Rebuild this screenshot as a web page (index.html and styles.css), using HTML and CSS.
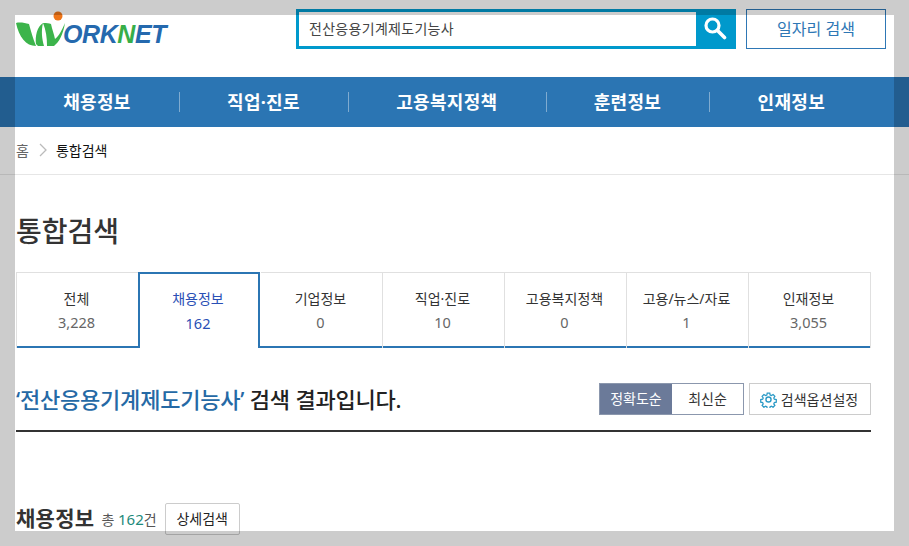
FILE: index.html
```html
<!DOCTYPE html>
<html lang="ko">
<head>
    <meta charset="UTF-8">
    <meta name="viewport" content="width=device-width, initial-scale=1.0">
    <title>WORKNET - 통합검색</title>
    <link rel="stylesheet" href="styles.css">
</head>
<body>
    <header class="top">
        <a class="logo" href="#">
            <svg class="logo-mark" width="50" height="36" viewBox="0 0 50 36">
                <circle cx="42" cy="5" r="4.5" fill="#ee7518"/>
                <path d="M0 12 C4 11 9 12 13 13 C15 20 17 28 20 35 C10 35 3 26 0 12Z" fill="#3cb44b"/>
                <path d="M20 33 C19 25 21 16 27 12 C25 20 26 28 28 35 L22 35Z" fill="#3cb44b"/>
                <path d="M27 12 C31 12 33 12 35 13 C36 18 38 23 39 28 C43 25 46 19 49 12 C47 24 43 31 38 35 L31 35 C31 27 30 19 27 12Z" fill="#3cb44b"/>
            </svg>
            <span class="logo-text">ORK<b>N</b>ET</span>
        </a>
        <div class="search-box">
            <span class="search-value">전산응용기계제도기능사</span>
            <button class="search-btn" aria-label="검색">
                <svg width="24" height="24" viewBox="0 0 24 24">
                    <circle cx="9.5" cy="9.5" r="6.5" fill="none" stroke="#fff" stroke-width="3.2"/>
                    <path d="M14.5 14.5 L21.5 21.5" stroke="#fff" stroke-width="3.6" stroke-linecap="round"/>
                </svg>
            </button>
        </div>
        <a class="job-btn" href="#">일자리 검색</a>
    </header>

    <nav class="gnb">
        <a href="#">채용정보</a>
        <a href="#">직업·진로</a>
        <a href="#">고용복지정책</a>
        <a href="#">훈련정보</a>
        <a href="#">인재정보</a>
    </nav>

    <div class="crumb">
        <span class="crumb-home">홈</span>
        <svg width="10" height="14" viewBox="0 0 10 14"><path d="M2 1 L8 7 L2 13" fill="none" stroke="#bbb" stroke-width="1.3"/></svg>
        <strong>통합검색</strong>
    </div>

    <main class="content">
        <h1>통합검색</h1>

        <ul class="tabs">
            <li><span>전체</span><em>3,228</em></li>
            <li class="on"><span>채용정보</span><em>162</em></li>
            <li><span>기업정보</span><em>0</em></li>
            <li><span>직업·진로</span><em>10</em></li>
            <li><span>고용복지정책</span><em>0</em></li>
            <li><span>고용/뉴스/자료</span><em>1</em></li>
            <li><span>인재정보</span><em>3,055</em></li>
        </ul>

        <div class="result-head">
            <h2><span class="keyword">‘전산응용기계제도기능사’</span> 검색 결과입니다.</h2>
            <div class="sort">
                <a class="active" href="#">정확도순</a>
                <a href="#">최신순</a>
            </div>
            <a class="option-btn" href="#">
                <svg width="17" height="17" viewBox="0 0 24 24" fill="none" stroke="#2b9ac6" stroke-width="2">
                    <circle cx="12" cy="12" r="3.6"/>
                    <path d="M10 2 h4 l.6 3 2 .9 2.6-1.7 2.8 2.8-1.7 2.6 .9 2 3 .6 v4 l-3 .6-.9 2 1.7 2.6-2.8 2.8-2.6-1.7-2 .9-.6 3 h-4 l-.6-3-2-.9-2.6 1.7-2.8-2.8 1.7-2.6-.9-2-3-.6 v-4 l3-.6 .9-2-1.7-2.6 2.8-2.8 2.6 1.7 2-.9Z" transform="translate(1.2 1.2) scale(.9)"/>
                </svg>
                검색옵션설정
            </a>
        </div>

        <div class="section-head">
            <h3>채용정보</h3>
            <span class="total">총 <b>162</b>건</span>
            <a class="detail-btn" href="#">상세검색</a>
        </div>
    </main>

    <div class="frame"></div>
</body>
</html>
```

FILE: styles.css
```css
/* Dasar */
html, body {
    margin: 0;
    height: 100%;
    overflow: hidden;
}

body {
    background-color: #fff;
    color: #222;
    font-family: "Noto Sans", "Noto Sans CJK KR", sans-serif;
}

a {
    text-decoration: none;
    color: inherit;
}

/* Header */
.top {
    display: flex;
    align-items: flex-start;
    height: 77px;
    padding: 9px 23px 0 16px;
    box-sizing: border-box;
}

.logo {
    display: flex;
    align-items: flex-start;
    width: 280px;
    height: 40px;
}

.logo-mark {
    flex: none;
    margin-top: 2px;
}

.logo-text {
    margin: 11px 0 0 -3px;
    font-family: "Liberation Sans", sans-serif;
    font-size: 25px;
    font-weight: bold;
    font-style: italic;
    line-height: 28px;
    letter-spacing: -0.4px;
    color: #2569ae;
}

.logo-text b {
    color: #37ae48;
}

.search-box {
    display: flex;
    width: 440px;
    height: 40px;
    border: 3px solid #0099cc;
    box-sizing: border-box;
}

.search-value {
    flex: 1;
    padding-left: 10px;
    font-size: 14px;
    line-height: 34px;
    letter-spacing: 0.3px;
    color: #444;
}

.search-btn {
    display: flex;
    align-items: center;
    justify-content: center;
    width: 37px;
    padding: 0 0 3px;
    border: none;
    background-color: #0099cc;
}

.job-btn {
    width: 140px;
    height: 40px;
    margin-left: 10px;
    box-sizing: border-box;
    border: 1px solid #2e77b5;
    text-align: center;
    font-size: 16px;
    line-height: 38px;
    color: #2e77b5;
}

/* Menu utama */
.gnb {
    display: flex;
    align-items: center;
    height: 50px;
    padding-left: 15px;
    background-color: #2b75b3;
}

.gnb a {
    position: relative;
    padding: 0 48.2px;
    font-size: 18px;
    font-weight: 700;
    line-height: 50px;
    letter-spacing: 0.3px;
    color: #fff;
}

.gnb a + a::before {
    content: "";
    position: absolute;
    left: 0;
    top: 15px;
    height: 20px;
    border-left: 1px solid #7fabd0;
}

/* Breadcrumb */
.crumb {
    display: flex;
    align-items: center;
    gap: 8px;
    height: 45px;
    padding: 0 0 2px 16px;
    border-bottom: 1px solid #e6e6e6;
    font-size: 14px;
}

.crumb-home {
    color: #666;
}

.crumb svg {
    margin-left: 1px;
}

.crumb strong {
    font-weight: 400;
    color: #111;
}

/* Isi */
.content {
    width: 855px;
    margin-left: 16px;
}

h1 {
    margin: 0;
    padding-top: 34px;
    font-size: 28px;
    font-weight: 500;
    line-height: 44px;
    color: #333;
}

.tabs {
    display: grid;
    grid-template-columns: 123px repeat(6, 122px);
    margin: 19px 0 0;
    padding: 0;
    list-style: none;
    height: 76px;
    box-sizing: border-box;
    border-bottom: 2px solid #2b75b3;
}

.tabs li {
    display: flex;
    flex-direction: column;
    align-items: center;
    padding: 14px 2px 0 0;
    border: 1px solid #e0e0e0;
    border-bottom: none;
    border-left: none;
    font-size: 14px;
    line-height: 24px;
    color: #333;
}

.tabs li:first-child {
    border-left: 1px solid #e0e0e0;
}

.tabs em {
    font-style: normal;
    font-size: 14.5px;
    line-height: 22px;
    color: #666;
}

.tabs li.on {
    height: 76px;
    box-sizing: border-box;
    margin: 0 1px 0 -1px;
    padding-top: 13px;
    border: 2px solid #2b75b3;
    border-bottom: none;
    background-color: #fff;
    color: #2a4fb5;
}

.tabs li.on em {
    line-height: 24px;
    color: #2a4fb5;
}

.result-head {
    display: flex;
    align-items: center;
    height: 84px;
    padding: 35px 0 15px;
    box-sizing: border-box;
    border-bottom: 2px solid #333;
}

h2 {
    flex: 1;
    margin: 0;
    padding-bottom: 2px;
    font-size: 22px;
    font-weight: 500;
    letter-spacing: -0.2px;
    color: #222;
}

.keyword {
    color: #2569a5;
}

.sort {
    display: flex;
    height: 32px;
    box-sizing: border-box;
    border: 1px solid #8b97ad;
    font-size: 14px;
    line-height: 30px;
    text-align: center;
}

.sort a {
    width: 71px;
    color: #333;
}

.sort a.active {
    width: 72px;
    background-color: #6b7a99;
    color: #fff;
}

.option-btn {
    display: flex;
    align-items: center;
    gap: 4px;
    justify-content: center;
    width: 122px;
    height: 32px;
    margin-left: 5px;
    padding-right: 2px;
    box-sizing: border-box;
    border: 1px solid #ccc;
    font-size: 14px;
    color: #333;
}

.section-head {
    display: flex;
    align-items: center;
    margin-top: 71px;
    height: 32px;
}

h3 {
    margin: 0 0 5px;
    font-size: 21px;
    font-weight: 700;
    letter-spacing: 0.3px;
    color: #333;
}

.total {
    margin: 0 8px 0 7px;
    font-size: 14px;
    color: #555;
}

.total b {
    font-size: 15px;
    font-weight: 400;
    color: #1e8a7a;
}

.detail-btn {
    width: 75px;
    height: 32px;
    box-sizing: border-box;
    border: 1px solid #ccc;
    border-radius: 2px;
    text-align: center;
    font-size: 14px;
    line-height: 30px;
    color: #222;
}

/* Bingkai abu-abu di atas halaman */
.frame {
    position: fixed;
    left: 0;
    top: 0;
    width: 100%;
    height: 100%;
    box-sizing: border-box;
    border: 15px solid rgba(0, 0, 0, 0.2);
    pointer-events: none;
}
```
